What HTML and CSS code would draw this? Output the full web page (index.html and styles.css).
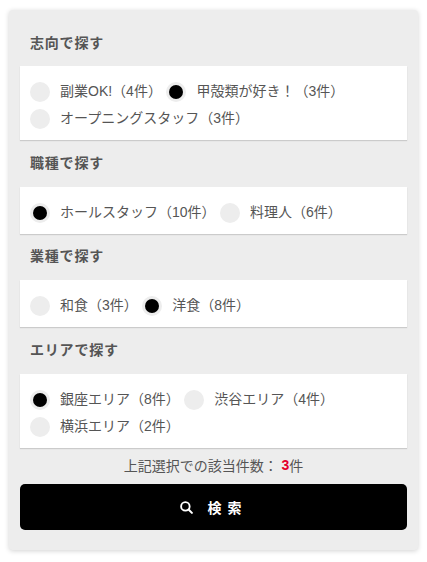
FILE: index.html
```html
<!DOCTYPE html>
<html lang="ja">
<head>
<meta charset="utf-8">
<title>検索</title>
<link rel="stylesheet" href="styles.css">
</head>
<body>
<form class="panel">
  <h2 class="heading first">志向で探す</h2>
  <div class="group">
    <label class="opt"><span class="radio"></span>副業OK!（4件）</label>
    <label class="opt"><span class="radio on"></span>甲殻類が好き！（3件）</label>
    <label class="opt"><span class="radio"></span>オープニングスタッフ（3件）</label>
  </div>
  <h2 class="heading">職種で探す</h2>
  <div class="group">
    <label class="opt"><span class="radio on"></span>ホールスタッフ（10件）</label>
    <label class="opt"><span class="radio"></span>料理人（6件）</label>
  </div>
  <h2 class="heading">業種で探す</h2>
  <div class="group">
    <label class="opt"><span class="radio"></span>和食（3件）</label>
    <label class="opt"><span class="radio on"></span>洋食（8件）</label>
  </div>
  <h2 class="heading">エリアで探す</h2>
  <div class="group">
    <label class="opt"><span class="radio on"></span>銀座エリア（8件）</label>
    <label class="opt"><span class="radio"></span>渋谷エリア（4件）</label>
    <label class="opt"><span class="radio"></span>横浜エリア（2件）</label>
  </div>
  <p class="count">上記選択での該当件数： <b class="num">3</b>件</p>
  <button type="button" class="search">
    <svg class="icon" viewBox="0 0 14 14" width="13" height="13" aria-hidden="true"><circle cx="5.8" cy="5.8" r="4.6" fill="none" stroke="#fff" stroke-width="2"/><path d="M9.2 9.2l3.6 3.6" stroke="#fff" stroke-width="2.2" stroke-linecap="round"/></svg>
    <span class="search-label">検索</span>
  </button>
</form>
</body>
</html>
```
FILE: styles.css
```css
* { box-sizing: border-box; }
html, body { margin: 0; background: #fff; }
body {
  padding: 10px 9px 12px 9px;
  font-family: "Liberation Sans", "Noto Sans CJK JP", sans-serif;
  color: #555;
  font-size: 14px;
}
.panel {
  width: 409px;
  height: 540px;
  padding: 0 11px;
  background: #ededed;
  border-radius: 4px;
  box-shadow: 0 1px 5px rgba(0, 0, 0, 0.18);
}
.heading {
  margin: 0;
  height: 46.5px;
  padding-left: 10px;
  padding-bottom: 3px;
  display: flex;
  align-items: center;
  font-size: 14px;
  font-weight: bold;
  letter-spacing: 0.8px;
  color: #555;
}
.heading.first { height: 56px; padding-top: 11px; padding-bottom: 3px; }
.group {
  display: flex;
  flex-wrap: wrap;
  padding: 12.5px 10px 7.5px;
  background: #fff;
  box-shadow: 0 1px 1px rgba(0, 0, 0, 0.14);
}
.opt {
  display: flex;
  align-items: center;
  height: 27px;
  padding-bottom: 4px;
  margin-right: 4.5px;
  white-space: nowrap;
}
.radio {
  position: relative;
  flex: none;
  width: 20px;
  height: 20px;
  margin-top: 4px;
  margin-right: 10px;
  border-radius: 50%;
  background: #ededed;
}
.radio.on::after {
  content: "";
  position: absolute;
  left: 3px;
  top: 3px;
  width: 14px;
  height: 14px;
  border-radius: 50%;
  background: #000;
}
.count {
  margin: 0;
  height: 36.5px;
  padding-bottom: 2px;
  display: flex;
  align-items: center;
  justify-content: center;
  white-space: pre;
  font-size: 14px;
}
.num { color: #e4002b; }
.search {
  display: flex;
  align-items: center;
  justify-content: center;
  width: 100%;
  height: 46px;
  padding: 0;
  border: 0;
  border-radius: 5px;
  background: #000;
  color: #fff;
  font-family: inherit;
  font-size: 14px;
  font-weight: bold;
}
.icon { margin-right: 15px; }
.search-label { letter-spacing: 6px; }
```
